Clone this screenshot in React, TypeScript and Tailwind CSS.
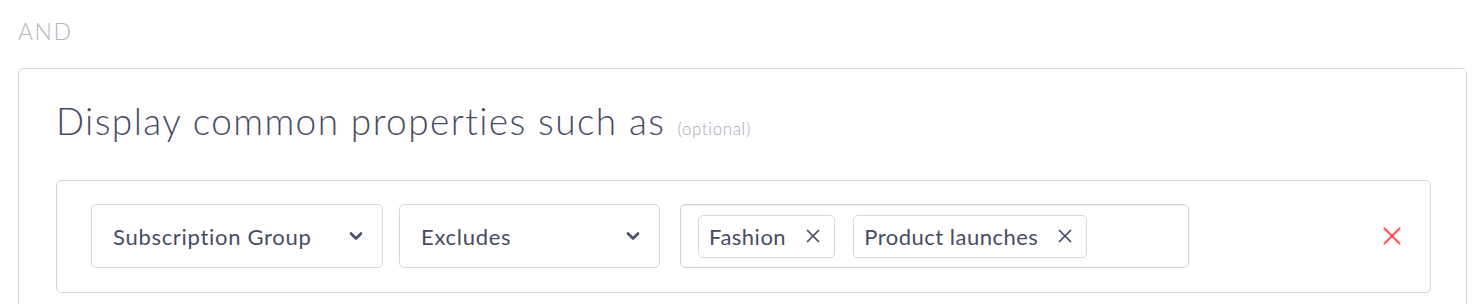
import { X } from 'lucide-react';

const Chevron = () => (
  <svg width="16" height="10" viewBox="0 0 16 10" fill="none">
    <path d="M3 2.5l5 5 5-5" stroke="#4a4f6b" strokeWidth="2.6" strokeLinecap="round" strokeLinejoin="round" />
  </svg>
);

const Select = ({ label, width }: { label: string; width: string }) => (
  <div className={`${width} h-16 flex items-center justify-between pl-[21px] pr-[18px] border border-[#d6d8de] rounded-[5px] bg-white`}>
    <span className="text-[22px] tracking-[0.7px] text-[#474c66]">{label}</span>
    <Chevron />
  </div>
);

const Tag = ({ label }: { label: string }) => (
  <div className="h-[43px] flex items-center gap-[16px] pl-[10px] pr-[10px] border border-[#d6d8de] rounded-[5px]">
    <span className="text-[22px] tracking-[0.5px] text-[#474c66]">{label}</span>
    <X size={22} strokeWidth={1.9} color="#474c66" />
  </div>
);

const App = () => {
  const tags = ['Fashion', 'Product launches'];

  return (
    <div className="w-[1484px] h-[304px] overflow-hidden bg-white" style={{ fontFamily: 'Lato, "Open Sans", sans-serif' }}>
      <div className="pl-[18px] pt-[18px] text-[23px] leading-[26px] tracking-[1.5px] text-[#b3b6c1] font-light">AND</div>

      {/* Condition card */}
      <div className="ml-[18px] mr-[17px] mt-[24px] border border-[#d6d8de] rounded-[5px] pl-[37px] pr-[35px] pt-[28px] h-[300px]">
        <h2 className="flex items-baseline gap-3 text-[37px] leading-[48px] tracking-[1.4px] font-light text-[#474c66]">
          Display common properties such as
          <span className="text-[17px] tracking-[0.6px] text-[#a6a9b6]">(optional)</span>
        </h2>

        <div className="mt-[27px] border border-[#d6d8de] rounded-[5px] pl-[34px] pr-[23px] pt-[23px] pb-[24px] flex items-center">
          <Select label="Subscription Group" width="w-[292px]" />
          <div className="w-4" />
          <Select label="Excludes" width="w-[261px]" />
          <div className="w-5" />
          <div className="w-[509px] h-16 flex items-center gap-[18px] px-[17px] border border-[#cfd1d8] rounded-[5px] shadow-[inset_0_1px_2px_rgba(0,0,0,0.08)]">
            {tags.map((t) => (
              <Tag key={t} label={t} />
            ))}
          </div>
          <div className="flex-1 flex justify-end">
            <X size={30} strokeWidth={1.8} color="#ff5a5f" />
          </div>
        </div>
      </div>
    </div>
  );
};

export default App;
